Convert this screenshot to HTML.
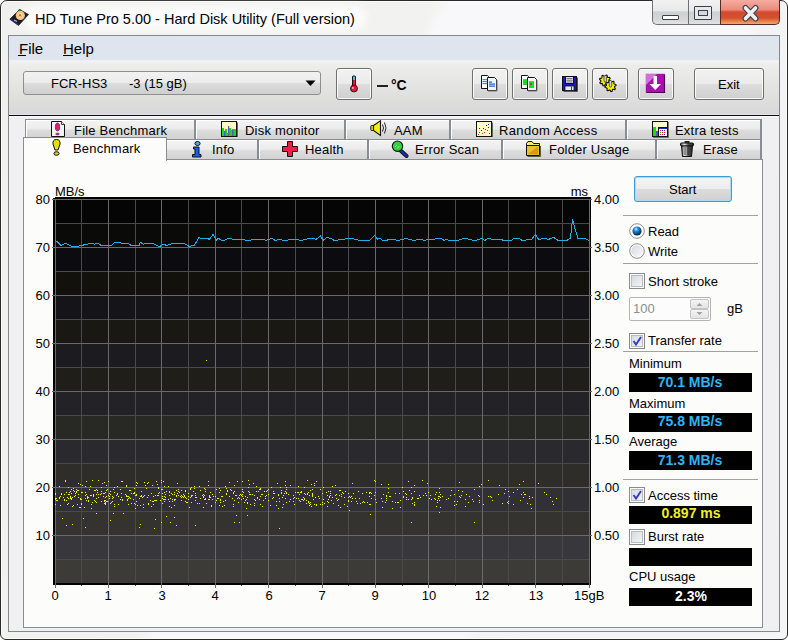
<!DOCTYPE html>
<html><head><meta charset="utf-8"><style>
*{margin:0;padding:0;box-sizing:border-box}
html,body{width:788px;height:640px;overflow:hidden;background:#fff}
body{position:relative;font-family:"Liberation Sans", sans-serif;}
.abs{position:absolute}
.t{position:absolute;white-space:pre;line-height:normal;font-family:"Liberation Sans", sans-serif;}
</style></head><body>
<!-- window frame -->
<div class="abs" style="left:0;top:0;width:788px;height:640px;border:1px solid #2a2a2a;border-radius:7px 7px 6px 6px;background:linear-gradient(115deg,#f0f0ee 0%,#f2f2f0 40%,#f8f8fa 41.5%,#f8f8fa 70%,#f3f3f5 71.5%,#f5f5f7 100%);box-shadow:inset 1px 1px 0 #fcfcfc, inset -1px -1px 0 #fcfcfc"></div>
<div class="abs" style="left:22px;top:6px;width:345px;height:24px;background:#fcfcfc;border-radius:12px;filter:blur(4px)"></div>
<!-- client border -->
<div class="abs" style="left:8px;top:35px;width:772px;height:597px;border:1px solid #84878c;background:#f0f0f2"></div>
<!-- menu bar -->
<div class="abs" style="left:9px;top:36px;width:770px;height:24px;background:#dfe5ee"></div>
<div class="abs" style="left:9px;top:60px;width:770px;height:3px;background:#f1f1f3"></div>
<!-- toolbar -->
<div class="abs" style="left:9px;top:63px;width:770px;height:51px;background:linear-gradient(#eeeeec,#e2e2e0 55%,#d8d8da)"></div>
<div class="abs" style="left:9px;top:114px;width:770px;height:1px;background:#e6e6e6"></div>
<div class="abs" style="left:9px;top:115px;width:770px;height:1px;background:#0c0c0c"></div>
<div class="abs" style="left:9px;top:116px;width:770px;height:1px;background:#fcfcfc"></div>
<div class="t" style="left:35px;top:11px;font-size:14.5px;color:#000;font-weight:400;">HD Tune Pro 5.00 - Hard Disk Utility (Full version)</div><svg class="abs" style="left:9px;top:8px" width="21" height="19" viewBox="0 0 21 19"><path d="M10.5 1.5 L19.5 6.5 L9.5 17.5 L0.8 11.2 Z" fill="#1a1a22" stroke="#222" stroke-width="0.8"/><path d="M2 11 L9.5 16.5" stroke="#2a2ad0" stroke-width="1"/><circle cx="11.3" cy="7.4" r="4.6" fill="#f6c47a"/><circle cx="11.3" cy="7.4" r="2.6" fill="#f9d9a8"/><path d="M9.8 8.6 L11 6.2 L12.2 8.6" stroke="#d04040" stroke-width="0.9" fill="none"/><ellipse cx="10.8" cy="2.2" rx="1.6" ry="0.9" fill="#1a7a2a"/><path d="M5 12 L8 13.5" stroke="#bbb" stroke-width="1.2"/></svg><div class="abs" style="left:652px;top:0;width:36px;height:25px;border:1px solid #6f7074;border-top:none;border-right:none;border-radius:0 0 0 5px;background:linear-gradient(#f2f2f2 0%,#e9e9e9 45%,#cfd0d2 50%,#d6d6d8 80%,#e2e2e2 100%)"></div><div class="abs" style="left:688px;top:0;width:32px;height:25px;border-bottom:1px solid #6f7074;border-left:1px solid #6f7074;background:linear-gradient(#f2f2f2 0%,#e9e9e9 45%,#cfd0d2 50%,#d6d6d8 80%,#e2e2e2 100%)"></div><div class="abs" style="left:720px;top:0;width:60px;height:25px;border:1px solid #5a2a22;border-top:none;border-radius:0 0 5px 0;background:linear-gradient(#f5aca0 0%,#eb8c7c 40%,#d44a30 50%,#d4502f 75%,#e8884c 90%,#f0a878 100%)"></div><div class="abs" style="left:662px;top:15px;width:17px;height:5px;border:1px solid #3c3f52;background:#fff;border-radius:1px"></div><div class="abs" style="left:694px;top:6px;width:18px;height:14px;border:1.5px solid #3c3f52;background:#e8e8ea;border-radius:1px"></div><div class="abs" style="left:698px;top:10px;width:10px;height:6px;border:1.5px solid #3c3f52;background:#d8d8da"></div><svg class="abs" style="left:740px;top:4px" width="21" height="18" viewBox="0 0 21 18"><path d="M5.5 4 L15.5 14.5 M15.5 4 L5.5 14.5" stroke="#404454" stroke-width="6" stroke-linecap="round"/><path d="M5.5 4 L15.5 14.5 M15.5 4 L5.5 14.5" stroke="#f0f0f0" stroke-width="3.6" stroke-linecap="round"/></svg><div class="t" style="left:19px;top:40px;font-size:15px;color:#000;font-weight:400;">File</div><div class="t" style="left:63px;top:40px;font-size:15px;color:#000;font-weight:400;">Help</div><div class="abs" style="left:18px;top:55px;width:8px;height:1px;background:#000"></div><div class="abs" style="left:63px;top:55px;width:10px;height:1px;background:#000"></div><div class="abs" style="left:23px;top:71px;width:298px;height:24px;border:1px solid #8e8f8f;border-radius:3px;background:linear-gradient(#f2f2f2 0%,#ebebeb 50%,#dddddd 51%,#cfcfcf 100%)"></div><div class="t" style="left:51px;top:76px;font-size:13px;color:#000;font-weight:400;">FCR-HS3</div><div class="t" style="left:129px;top:76px;font-size:13px;color:#000;font-weight:400;">-3 (15 gB)</div><svg class="abs" style="left:305px;top:80px" width="11" height="7" viewBox="0 0 11 7"><path d="M0.5 0.5 L10.5 0.5 L5.5 6 Z" fill="#000"/></svg><div class="abs" style="left:336px;top:68px;width:36px;height:32px;border:1px solid #707070;border-radius:3px;background:linear-gradient(#f2f2f2 0%,#ebebeb 50%,#dddddd 51%,#cfcfcf 100%);box-shadow:inset 0 0 0 1px rgba(255,255,255,0.85)"></div><svg class="abs" style="left:349px;top:75px" width="10" height="18" viewBox="0 0 10 18"><rect x="3" y="0.5" width="4" height="12" rx="1.5" fill="#111"/><rect x="4" y="1.5" width="2" height="3.5" fill="#40c8f0"/><rect x="4" y="5" width="2" height="8" fill="#e01838"/><circle cx="5" cy="13.5" r="3.8" fill="#111"/><circle cx="5" cy="13.5" r="2.9" fill="#e01838"/><rect x="3.2" y="12.3" width="1.4" height="1.4" fill="#fff"/></svg><div class="abs" style="left:377px;top:85px;width:11px;height:2px;background:#222"></div><div class="t" style="left:391px;top:77px;font-size:14px;color:#000;font-weight:700;">°C</div><div class="abs" style="left:472px;top:68px;width:36px;height:32px;border:1px solid #707070;border-radius:3px;background:linear-gradient(#f2f2f2 0%,#ebebeb 50%,#dddddd 51%,#cfcfcf 100%);box-shadow:inset 0 0 0 1px rgba(255,255,255,0.85)"></div><div class="abs" style="left:512px;top:68px;width:36px;height:32px;border:1px solid #707070;border-radius:3px;background:linear-gradient(#f2f2f2 0%,#ebebeb 50%,#dddddd 51%,#cfcfcf 100%);box-shadow:inset 0 0 0 1px rgba(255,255,255,0.85)"></div><div class="abs" style="left:552px;top:68px;width:36px;height:32px;border:1px solid #707070;border-radius:3px;background:linear-gradient(#f2f2f2 0%,#ebebeb 50%,#dddddd 51%,#cfcfcf 100%);box-shadow:inset 0 0 0 1px rgba(255,255,255,0.85)"></div><div class="abs" style="left:592px;top:68px;width:36px;height:32px;border:1px solid #707070;border-radius:3px;background:linear-gradient(#f2f2f2 0%,#ebebeb 50%,#dddddd 51%,#cfcfcf 100%);box-shadow:inset 0 0 0 1px rgba(255,255,255,0.85)"></div><div class="abs" style="left:638px;top:68px;width:36px;height:32px;border:1px solid #707070;border-radius:3px;background:linear-gradient(#f2f2f2 0%,#ebebeb 50%,#dddddd 51%,#cfcfcf 100%);box-shadow:inset 0 0 0 1px rgba(255,255,255,0.85)"></div><div class="abs" style="left:694px;top:68px;width:70px;height:32px;border:1px solid #707070;border-radius:3px;background:linear-gradient(#f2f2f2 0%,#ebebeb 50%,#dddddd 51%,#cfcfcf 100%);box-shadow:inset 0 0 0 1px rgba(255,255,255,0.85)"></div><div class="t" style="left:718px;top:77px;font-size:13px;color:#000;font-weight:400;">Exit</div><svg class="abs" style="left:481px;top:75px" width="18" height="17" viewBox="0 0 18 17"><path d="M0.5 0.5 H6.5 L7.5 1.5 V13.5 H0.5 Z" fill="#fff" stroke="#111"/><rect x="1.5" y="4" width="5" height="1.2" fill="#1aa0e0"/><rect x="1.5" y="6" width="5" height="1.2" fill="#1aa0e0"/><rect x="1.5" y="8" width="5" height="1.2" fill="#1aa0e0"/><path d="M6.5 2.5 H13.5 L15.5 4.5 V15.5 H6.5 Z" fill="#f4f4f4" stroke="#111"/><rect x="8" y="6.5" width="3" height="1.2" fill="#1060e0"/><rect x="8" y="8.5" width="6" height="1.2" fill="#1060e0"/><rect x="8" y="10.5" width="6" height="1.2" fill="#1060e0"/><path d="M16 5 V16 H7" stroke="#777" stroke-width="1" fill="none"/></svg><svg class="abs" style="left:521px;top:75px" width="18" height="17" viewBox="0 0 18 17"><path d="M0.5 0.5 H6.5 L7.5 1.5 V13.5 H0.5 Z" fill="#fff" stroke="#111"/><rect x="2" y="4" width="4" height="6" fill="#10e020"/><rect x="2" y="4" width="4" height="1" fill="#30c0f0"/><path d="M6.5 2.5 H13.5 L15.5 4.5 V15.5 H6.5 Z" fill="#f4f4f4" stroke="#111"/><rect x="8" y="6" width="5" height="7" fill="#10e020"/><rect x="8" y="6" width="5" height="1" fill="#30c0f0"/><circle cx="10" cy="9" r="1" fill="#e02020"/><path d="M16 5 V16 H7" stroke="#777" stroke-width="1" fill="none"/></svg><svg class="abs" style="left:562px;top:76px" width="16" height="16" viewBox="0 0 16 16"><rect x="0.5" y="0.5" width="14" height="14" fill="#1818c0" stroke="#111"/><rect x="3.5" y="0.5" width="8" height="7" fill="#ddd" stroke="#111"/><rect x="4.5" y="2" width="6" height="0.8" fill="#666"/><rect x="4.5" y="3.8" width="6" height="0.8" fill="#666"/><rect x="4.5" y="5.6" width="6" height="0.8" fill="#666"/><rect x="3" y="10" width="9" height="4.5" fill="#e8e8e8" stroke="#111" stroke-width="0.8"/><rect x="9" y="10.5" width="0.8" height="4" fill="#111"/><path d="M15.5 1.5 V15.5 H1.5" stroke="#555" fill="none"/></svg><svg class="abs" style="left:599px;top:74px" width="19" height="19" viewBox="0 0 19 19"><path d="M11.49 7.61 L11.17 8.66 L9.48 8.85 L8.96 9.48 L9.09 11.17 L8.12 11.68 L6.80 10.62 L5.98 10.70 L4.89 11.99 L3.84 11.67 L3.65 9.98 L3.02 9.46 L1.33 9.59 L0.82 8.62 L1.88 7.30 L1.80 6.48 L0.51 5.39 L0.83 4.34 L2.52 4.15 L3.04 3.52 L2.91 1.83 L3.88 1.32 L5.20 2.38 L6.02 2.30 L7.11 1.01 L8.16 1.33 L8.35 3.02 L8.98 3.54 L10.67 3.41 L11.18 4.38 L10.12 5.70 L10.20 6.52 Z" fill="#f4f000" stroke="#111" stroke-width="1.1" stroke-linejoin="round"/><path d="M16.41 14.68 L15.80 15.59 L14.13 15.27 L13.45 15.72 L13.08 17.37 L12.00 17.58 L11.05 16.18 L10.24 16.01 L8.82 16.91 L7.91 16.30 L8.23 14.63 L7.78 13.95 L6.13 13.58 L5.92 12.50 L7.32 11.55 L7.49 10.74 L6.59 9.32 L7.20 8.41 L8.87 8.73 L9.55 8.28 L9.92 6.63 L11.00 6.42 L11.95 7.82 L12.76 7.99 L14.18 7.09 L15.09 7.70 L14.77 9.37 L15.22 10.05 L16.87 10.42 L17.08 11.50 L15.68 12.45 L15.51 13.26 Z" fill="#f4f000" stroke="#111" stroke-width="1.1" stroke-linejoin="round"/><rect x="5" y="1.5" width="2.4" height="6.5" rx="1" fill="#d0d0e0" stroke="#333" stroke-width="0.7"/><rect x="10.3" y="6.5" width="2.4" height="6.5" rx="1" fill="#d0d0e0" stroke="#333" stroke-width="0.7"/></svg><svg class="abs" style="left:645px;top:73px" width="21" height="21" viewBox="0 0 21 21"><rect x="0.8" y="0.8" width="19" height="19" fill="#a810b0"/><path d="M1 1 H12 L1 12 Z" fill="#d070d8"/><path d="M1.5 19.5 H19.5 V1.5" stroke="#500050" stroke-width="1.2" fill="none"/><path d="M8.5 3 H12 V11 H16 L10.25 17 L4.5 11 H8.5 Z" fill="#fff"/></svg><div class="abs" style="left:25px;top:119px;width:171px;height:20px;border-top:1px solid #898c95;border-left:1px solid #898c95;border-right:2px solid #898c95;background:linear-gradient(#f3f3f3 0%,#ececec 45%,#dcdcdc 55%,#d2d2d2 100%);box-shadow:inset 1px 1px 0 #fff"></div><div class="abs" style="left:196px;top:119px;width:150px;height:20px;border-top:1px solid #898c95;border-right:2px solid #898c95;background:linear-gradient(#f3f3f3 0%,#ececec 45%,#dcdcdc 55%,#d2d2d2 100%);box-shadow:inset 1px 1px 0 #fff"></div><div class="abs" style="left:346px;top:119px;width:105px;height:20px;border-top:1px solid #898c95;border-right:2px solid #898c95;background:linear-gradient(#f3f3f3 0%,#ececec 45%,#dcdcdc 55%,#d2d2d2 100%);box-shadow:inset 1px 1px 0 #fff"></div><div class="abs" style="left:451px;top:119px;width:176px;height:20px;border-top:1px solid #898c95;border-right:2px solid #898c95;background:linear-gradient(#f3f3f3 0%,#ececec 45%,#dcdcdc 55%,#d2d2d2 100%);box-shadow:inset 1px 1px 0 #fff"></div><div class="abs" style="left:627px;top:119px;width:135px;height:20px;border-top:1px solid #898c95;border-right:2px solid #898c95;background:linear-gradient(#f3f3f3 0%,#ececec 45%,#dcdcdc 55%,#d2d2d2 100%);box-shadow:inset 1px 1px 0 #fff"></div><div class="abs" style="left:166px;top:139px;width:93px;height:21px;border-top:1px solid #898c95;border-right:2px solid #898c95;background:linear-gradient(#f3f3f3 0%,#ececec 45%,#dcdcdc 55%,#d2d2d2 100%);box-shadow:inset 1px 1px 0 #fff"></div><div class="abs" style="left:259px;top:139px;width:110px;height:21px;border-top:1px solid #898c95;border-right:2px solid #898c95;background:linear-gradient(#f3f3f3 0%,#ececec 45%,#dcdcdc 55%,#d2d2d2 100%);box-shadow:inset 1px 1px 0 #fff"></div><div class="abs" style="left:369px;top:139px;width:134px;height:21px;border-top:1px solid #898c95;border-right:2px solid #898c95;background:linear-gradient(#f3f3f3 0%,#ececec 45%,#dcdcdc 55%,#d2d2d2 100%);box-shadow:inset 1px 1px 0 #fff"></div><div class="abs" style="left:503px;top:139px;width:154px;height:21px;border-top:1px solid #898c95;border-right:2px solid #898c95;background:linear-gradient(#f3f3f3 0%,#ececec 45%,#dcdcdc 55%,#d2d2d2 100%);box-shadow:inset 1px 1px 0 #fff"></div><div class="abs" style="left:657px;top:139px;width:105px;height:21px;border-top:1px solid #898c95;border-right:2px solid #898c95;background:linear-gradient(#f3f3f3 0%,#ececec 45%,#dcdcdc 55%,#d2d2d2 100%);box-shadow:inset 1px 1px 0 #fff"></div><div class="t" style="left:74px;top:123px;font-size:13px;color:#000;font-weight:400;letter-spacing:0.2px">File Benchmark</div><div class="t" style="left:245px;top:123px;font-size:13px;color:#000;font-weight:400;letter-spacing:0.2px">Disk monitor</div><div class="t" style="left:394px;top:123px;font-size:13px;color:#000;font-weight:400;letter-spacing:0.2px">AAM</div><div class="t" style="left:499px;top:123px;font-size:13px;color:#000;font-weight:400;letter-spacing:0.35px">Random Access</div><div class="t" style="left:675px;top:123px;font-size:13px;color:#000;font-weight:400;letter-spacing:0.2px">Extra tests</div><div class="t" style="left:212px;top:142px;font-size:13px;color:#000;font-weight:400;letter-spacing:0.2px">Info</div><div class="t" style="left:305px;top:142px;font-size:13px;color:#000;font-weight:400;letter-spacing:0.2px">Health</div><div class="t" style="left:415px;top:142px;font-size:13px;color:#000;font-weight:400;letter-spacing:0.2px">Error Scan</div><div class="t" style="left:549px;top:142px;font-size:13px;color:#000;font-weight:400;letter-spacing:0.2px">Folder Usage</div><div class="t" style="left:703px;top:142px;font-size:13px;color:#000;font-weight:400;letter-spacing:0.2px">Erase</div><div class="abs" style="left:23px;top:159px;width:740px;height:469px;border:1px solid #898c95;background:#fcfcfa"></div><div class="abs" style="left:23px;top:137px;width:144px;height:24px;border:1px solid #898c95;border-bottom:none;background:#fcfcfa"></div><div class="t" style="left:73px;top:141px;font-size:13px;color:#000;font-weight:400;letter-spacing:0.2px">Benchmark</div><svg class="abs" style="left:51px;top:121px" width="15" height="16" viewBox="0 0 15 16"><path d="M0.5 0.5 H10.5 L13.5 3.5 V15.5 H0.5 Z" fill="#f4f4f4" stroke="#111"/><path d="M10.5 0.5 V3.5 H13.5" fill="#fff" stroke="#111" stroke-width="0.8"/><ellipse cx="6.5" cy="6" rx="2.2" ry="4" fill="#e8205a" stroke="#5030a0" stroke-width="0.8"/><ellipse cx="6.5" cy="13" rx="1.8" ry="1" fill="#e8205a" stroke="#5030a0" stroke-width="0.6"/></svg><svg class="abs" style="left:52px;top:139px" width="9" height="17" viewBox="0 0 9 17"><path d="M4.5 0.5 C7.5 0.5 8.3 2.5 8 5 L6 11 H3 L1 5 C0.7 2.5 1.5 0.5 4.5 0.5 Z" fill="#e0e010" stroke="#111" stroke-width="1"/><ellipse cx="4.5" cy="14.5" rx="2.6" ry="1.8" fill="#d8d010" stroke="#111"/></svg><svg class="abs" style="left:221px;top:121px" width="17" height="16" viewBox="0 0 17 16"><rect x="0.5" y="0.5" width="15" height="15" fill="#fcfcc0" stroke="#111"/><path d="M1 7 H3 V11 H4 V8 H6 V12 H7 V5 H8 V7 H10 V9 H11 V8 H15 V15 H1 Z" fill="#10e010"/><rect x="3" y="10" width="1.5" height="5" fill="#6050d0"/><rect x="7" y="5" width="1.2" height="10" fill="#6050d0"/><rect x="11" y="9" width="1.5" height="6" fill="#6050d0"/><path d="M16.5 1.5 V16.5 H1.5" stroke="#666" fill="none"/></svg><svg class="abs" style="left:192px;top:141px" width="10" height="17" viewBox="0 0 10 17"><ellipse cx="5.5" cy="2.5" rx="2.6" ry="2" fill="#30b8f0" stroke="#111"/><path d="M1.5 6 H7 V13.5 H9 V16 H0.5 V13.5 H3 V8 H1.5 Z" fill="#1060e8" stroke="#111"/></svg><svg class="abs" style="left:282px;top:141px" width="17" height="17" viewBox="0 0 17 17"><path d="M5.5 0.5 H10.5 V5.5 H15.5 V10.5 H10.5 V15.5 H5.5 V10.5 H0.5 V5.5 H5.5 Z" fill="#e8204a" stroke="#111" stroke-width="1"/></svg><svg class="abs" style="left:370px;top:120px" width="18" height="17" viewBox="0 0 18 17"><rect x="0.8" y="5.5" width="3" height="5" rx="1" fill="#e8e010" stroke="#111"/><path d="M3.5 5.5 L10.5 0.8 V15.5 L3.5 10.5 Z" fill="#f0f010" stroke="#111" stroke-width="1.1"/><path d="M12.5 4.5 Q14.5 8 12.5 11.5 M14.5 2.5 Q17.5 8 14.5 13.5" stroke="#111" fill="none" stroke-width="0.9"/></svg><svg class="abs" style="left:391px;top:140px" width="18" height="18" viewBox="0 0 18 18"><path d="M8.5 9.5 L15.5 16" stroke="#111" stroke-width="4" stroke-linecap="round"/><path d="M8.5 9.5 L15.5 16" stroke="#1030c0" stroke-width="2.2" stroke-linecap="round"/><circle cx="6.5" cy="6.2" r="5.2" fill="#30d040" stroke="#111" stroke-width="1.1"/><path d="M4 7 L6 5 M6 8.5 L8.5 6" stroke="#b0f0b0" stroke-width="0.8"/></svg><svg class="abs" style="left:476px;top:121px" width="17" height="16" viewBox="0 0 17 16"><rect x="0.5" y="0.5" width="15" height="15" fill="#fcfcc8" stroke="#111"/><path d="M16.5 1.5 V16.5 H1.5" stroke="#666" fill="none"/><g fill="#1030d0"><rect x="3" y="7" width="1" height="1"/><rect x="7" y="7" width="1" height="1"/><rect x="10" y="4" width="1" height="1"/><rect x="12" y="3" width="1" height="1"/><rect x="5" y="9" width="1" height="1"/><rect x="12" y="6" width="1" height="1"/></g><g fill="#e02040"><rect x="2" y="13" width="1" height="1"/><rect x="3" y="11" width="1" height="1"/><rect x="6" y="12" width="1" height="1"/><rect x="8" y="11" width="1" height="1"/><rect x="11" y="9" width="1" height="1"/><rect x="13" y="12" width="1" height="1"/><rect x="9" y="8" width="1" height="1"/></g></svg><svg class="abs" style="left:526px;top:141px" width="16" height="16" viewBox="0 0 16 16"><path d="M0.5 2.5 L2 0.5 H6 L7.5 2.5 H13.5 V5.5 H0.5 Z" fill="#f8e870" stroke="#111"/><path d="M0.5 4.5 H13.5 V14.5 H0.5 Z" fill="#e8c030" stroke="#111"/><path d="M2 13 L12 5.5 V13.5 Z" fill="#d89820"/><path d="M14.5 5 V15.5 H1.5" stroke="#555" fill="none"/></svg><svg class="abs" style="left:652px;top:121px" width="17" height="17" viewBox="0 0 17 17" shape-rendering="crispEdges"><rect x="0" y="0" width="16" height="16" fill="#111"/><rect x="1" y="1" width="14" height="14" fill="#fcfcc8"/><rect x="1" y="6" width="3" height="9" fill="#10e010"/><rect x="4" y="10" width="2" height="5" fill="#6050d0"/><rect x="6" y="6" width="10" height="10" fill="#111"/><rect x="7" y="7" width="8" height="8" fill="#fafafa"/><rect x="7" y="7" width="8" height="1" fill="#1030d0"/><g fill="#e02040"><rect x="8" y="9" width="1" height="1"/><rect x="12" y="9" width="1" height="1"/><rect x="10" y="11" width="1" height="1"/><rect x="12" y="11" width="1" height="1"/><rect x="8" y="13" width="1" height="1"/><rect x="10" y="13" width="1" height="1"/></g><g fill="#1030d0"><rect x="10" y="9" width="1" height="1"/><rect x="12" y="13" width="1" height="1"/></g><rect x="8" y="11" width="1" height="1" fill="#10c010"/><rect x="16" y="1" width="1" height="16" fill="#777"/><rect x="1" y="16" width="16" height="1" fill="#777"/></svg><svg class="abs" style="left:680px;top:141px" width="15" height="17" viewBox="0 0 15 17"><defs><linearGradient id="tg" x1="0" x2="1"><stop offset="0" stop-color="#444"/><stop offset="0.3" stop-color="#eee"/><stop offset="0.6" stop-color="#555"/><stop offset="1" stop-color="#222"/></linearGradient></defs><rect x="5" y="0.5" width="4" height="2" fill="#333" stroke="#111" stroke-width="0.8"/><rect x="0.5" y="2" width="13" height="3" rx="1" fill="url(#tg)" stroke="#111"/><path d="M1.5 5 H12.5 L11.5 15.5 H2.5 Z" fill="url(#tg)" stroke="#111"/><path d="M5 6 V14 M8 6 V14" stroke="#222" stroke-width="0.8"/></svg><div class="t" style="left:55px;top:184px;font-size:13px;color:#000;font-weight:400;">MB/s</div><div class="t" style="right:200px;top:184px;font-size:13px;color:#000;font-weight:400;text-align:right;">ms</div><div class="t" style="right:738px;top:192px;font-size:13px;color:#000;font-weight:400;text-align:right;">80</div><div class="t" style="left:594px;top:192px;font-size:13px;color:#000;font-weight:400;">4.00</div><div class="t" style="right:738px;top:240px;font-size:13px;color:#000;font-weight:400;text-align:right;">70</div><div class="t" style="left:594px;top:240px;font-size:13px;color:#000;font-weight:400;">3.50</div><div class="t" style="right:738px;top:288px;font-size:13px;color:#000;font-weight:400;text-align:right;">60</div><div class="t" style="left:594px;top:288px;font-size:13px;color:#000;font-weight:400;">3.00</div><div class="t" style="right:738px;top:336px;font-size:13px;color:#000;font-weight:400;text-align:right;">50</div><div class="t" style="left:594px;top:336px;font-size:13px;color:#000;font-weight:400;">2.50</div><div class="t" style="right:738px;top:384px;font-size:13px;color:#000;font-weight:400;text-align:right;">40</div><div class="t" style="left:594px;top:384px;font-size:13px;color:#000;font-weight:400;">2.00</div><div class="t" style="right:738px;top:432px;font-size:13px;color:#000;font-weight:400;text-align:right;">30</div><div class="t" style="left:594px;top:432px;font-size:13px;color:#000;font-weight:400;">1.50</div><div class="t" style="right:738px;top:480px;font-size:13px;color:#000;font-weight:400;text-align:right;">20</div><div class="t" style="left:594px;top:480px;font-size:13px;color:#000;font-weight:400;">1.00</div><div class="t" style="right:738px;top:528px;font-size:13px;color:#000;font-weight:400;text-align:right;">10</div><div class="t" style="left:594px;top:528px;font-size:13px;color:#000;font-weight:400;">0.50</div><div class="t" style="left:-45px;width:200px;text-align:center;top:588px;font-size:13px;color:#000;font-weight:400;">0</div><div class="t" style="left:8px;width:200px;text-align:center;top:588px;font-size:13px;color:#000;font-weight:400;">1</div><div class="t" style="left:62px;width:200px;text-align:center;top:588px;font-size:13px;color:#000;font-weight:400;">3</div><div class="t" style="left:115px;width:200px;text-align:center;top:588px;font-size:13px;color:#000;font-weight:400;">4</div><div class="t" style="left:169px;width:200px;text-align:center;top:588px;font-size:13px;color:#000;font-weight:400;">6</div><div class="t" style="left:222px;width:200px;text-align:center;top:588px;font-size:13px;color:#000;font-weight:400;">7</div><div class="t" style="left:275px;width:200px;text-align:center;top:588px;font-size:13px;color:#000;font-weight:400;">9</div><div class="t" style="left:329px;width:200px;text-align:center;top:588px;font-size:13px;color:#000;font-weight:400;">10</div><div class="t" style="left:382px;width:200px;text-align:center;top:588px;font-size:13px;color:#000;font-weight:400;">12</div><div class="t" style="left:436px;width:200px;text-align:center;top:588px;font-size:13px;color:#000;font-weight:400;">13</div><div class="t" style="left:574px;top:588px;font-size:13px;color:#000;font-weight:400;">15gB</div><div class="abs" style="left:634px;top:176px;width:98px;height:26px;border:1px solid #3c9ad6;border-radius:3px;background:linear-gradient(#f4f4f4 0%,#ececec 50%,#dcdcdc 51%,#d0d0d0 100%);box-shadow:inset 0 0 0 1px #a8dcf4"></div><div class="t" style="left:669px;top:182px;font-size:13px;color:#000;font-weight:400;">Start</div><div class="abs" style="left:623px;top:215px;width:135px;height:1px;background:#a0a0a0"></div><div class="abs" style="left:623px;top:263px;width:135px;height:1px;background:#a0a0a0"></div><div class="abs" style="left:623px;top:351px;width:135px;height:1px;background:#a0a0a0"></div><div class="abs" style="left:623px;top:479px;width:135px;height:1px;background:#a0a0a0"></div><svg class="abs" style="left:628px;top:222px" width="18" height="38" viewBox="0 0 18 38"><defs><radialGradient id="rb" cx="0.4" cy="0.3" r="0.65"><stop offset="0" stop-color="#b8f0ff"/><stop offset="0.35" stop-color="#2090e0"/><stop offset="0.8" stop-color="#0a4a80"/><stop offset="1" stop-color="#0a3040"/></radialGradient><linearGradient id="rg" x1="0" y1="0" x2="1" y2="1"><stop offset="0" stop-color="#d4d8de"/><stop offset="1" stop-color="#fafafa"/></linearGradient></defs><circle cx="9" cy="9" r="7.3" fill="#fff" stroke="#8c8c8c" stroke-width="1"/><circle cx="9" cy="9" r="4.6" fill="url(#rb)"/><circle cx="9" cy="29" r="7.3" fill="#fff" stroke="#8c8c8c" stroke-width="1"/><circle cx="9" cy="29" r="5.8" fill="url(#rg)"/></svg><div class="t" style="left:648px;top:224px;font-size:13px;color:#000;font-weight:400;">Read</div><div class="t" style="left:648px;top:244px;font-size:13px;color:#000;font-weight:400;">Write</div><div class="abs" style="left:629px;top:273px;width:16px;height:16px;border:1px solid #8a8a8a;background:linear-gradient(135deg,#d2d6de,#f8f8f8);box-shadow:inset 0 0 0 1px #fbfbfb, inset 0 0 0 2px #b8bcc2"></div><div class="t" style="left:648px;top:274px;font-size:13px;color:#000;font-weight:400;">Short stroke</div><div class="abs" style="left:629px;top:297px;width:82px;height:24px;border:1px solid #b4b4b4;border-radius:2px;background:#fcfcfc"></div><div class="t" style="left:633px;top:301px;font-size:13px;color:#8d8d8d;font-weight:400;">100</div><div class="abs" style="left:690px;top:299px;width:19px;height:10px;border:1px solid #c4c4c4;border-radius:2px;background:linear-gradient(#f4f4f4,#e4e4e4)"></div><div class="abs" style="left:690px;top:309px;width:19px;height:10px;border:1px solid #c4c4c4;border-radius:2px;background:linear-gradient(#f4f4f4,#e4e4e4)"></div><svg class="abs" style="left:690px;top:299px" width="19" height="20" viewBox="0 0 19 20"><path d="M6.5 7 L9.5 4 L12.5 7 Z M6.5 13 L9.5 16 L12.5 13 Z" fill="#a0a0a0"/></svg><div class="t" style="left:727px;top:301px;font-size:13px;color:#000;font-weight:400;">gB</div><div class="abs" style="left:629px;top:333px;width:16px;height:16px;border:1px solid #8a8a8a;background:linear-gradient(135deg,#d2d6de,#f8f8f8);box-shadow:inset 0 0 0 1px #fbfbfb, inset 0 0 0 2px #b8bcc2"></div><svg class="abs" style="left:630px;top:334px" width="14" height="14" viewBox="0 0 14 14"><path d="M3.5 7 L6 10.5 L11 3" stroke="#3838c8" stroke-width="1.9" fill="none"/></svg><div class="t" style="left:648px;top:333px;font-size:13px;color:#000;font-weight:400;">Transfer rate</div><div class="t" style="left:629px;top:356px;font-size:13px;color:#000;font-weight:400;">Minimum</div><div class="abs" style="left:629px;top:373px;width:123px;height:19px;background:#000"></div><div class="t" style="left:590px;width:200px;text-align:center;top:374px;font-size:14px;color:#30b4f4;font-weight:700;">70.1 MB/s</div><div class="t" style="left:629px;top:396px;font-size:13px;color:#000;font-weight:400;">Maximum</div><div class="abs" style="left:629px;top:413px;width:123px;height:19px;background:#000"></div><div class="t" style="left:590px;width:200px;text-align:center;top:413px;font-size:14px;color:#30b4f4;font-weight:700;">75.8 MB/s</div><div class="t" style="left:629px;top:434px;font-size:13px;color:#000;font-weight:400;">Average</div><div class="abs" style="left:629px;top:451px;width:123px;height:19px;background:#000"></div><div class="t" style="left:590px;width:200px;text-align:center;top:452px;font-size:14px;color:#30b4f4;font-weight:700;">71.3 MB/s</div><div class="abs" style="left:629px;top:487px;width:16px;height:16px;border:1px solid #8a8a8a;background:linear-gradient(135deg,#d2d6de,#f8f8f8);box-shadow:inset 0 0 0 1px #fbfbfb, inset 0 0 0 2px #b8bcc2"></div><svg class="abs" style="left:630px;top:488px" width="14" height="14" viewBox="0 0 14 14"><path d="M3.5 7 L6 10.5 L11 3" stroke="#3838c8" stroke-width="1.9" fill="none"/></svg><div class="t" style="left:648px;top:488px;font-size:13px;color:#000;font-weight:400;">Access time</div><div class="abs" style="left:629px;top:506px;width:123px;height:18px;background:#000"></div><div class="t" style="left:591px;width:200px;text-align:center;top:505px;font-size:14px;color:#f0f020;font-weight:700;">0.897 ms</div><div class="abs" style="left:629px;top:529px;width:16px;height:16px;border:1px solid #8a8a8a;background:linear-gradient(135deg,#d2d6de,#f8f8f8);box-shadow:inset 0 0 0 1px #fbfbfb, inset 0 0 0 2px #b8bcc2"></div><div class="t" style="left:648px;top:529px;font-size:13px;color:#000;font-weight:400;">Burst rate</div><div class="abs" style="left:629px;top:548px;width:123px;height:18px;background:#000"></div><div class="t" style="left:629px;top:569px;font-size:13px;color:#000;font-weight:400;">CPU usage</div><div class="abs" style="left:629px;top:588px;width:123px;height:18px;background:#000"></div><div class="t" style="left:591px;width:200px;text-align:center;top:588px;font-size:14px;color:#ffffff;font-weight:700;">2.3%</div>
<svg class="abs" style="left:0;top:0" width="788" height="640" viewBox="0 0 788 640"><rect x="55" y="199" width="535" height="24" fill="#050505"/><rect x="55" y="223" width="535" height="24" fill="#0a0a08"/><rect x="55" y="247" width="535" height="24" fill="#0c0c10"/><rect x="55" y="271" width="535" height="24" fill="#12110c"/><rect x="55" y="295" width="535" height="24" fill="#151519"/><rect x="55" y="319" width="535" height="24" fill="#191812"/><rect x="55" y="343" width="535" height="24" fill="#1c1c20"/><rect x="55" y="367" width="535" height="24" fill="#1f1e19"/><rect x="55" y="391" width="535" height="24" fill="#232327"/><rect x="55" y="415" width="535" height="24" fill="#282824"/><rect x="55" y="439" width="535" height="24" fill="#2a2a2e"/><rect x="55" y="463" width="535" height="24" fill="#2e2d29"/><rect x="55" y="487" width="535" height="24" fill="#303035"/><rect x="55" y="511" width="535" height="24" fill="#343330"/><rect x="55" y="535" width="535" height="24" fill="#38383c"/><rect x="55" y="559" width="535" height="24" fill="#3c3b38"/><rect x="53" y="198" width="2" height="387" fill="#000"/><rect x="55" y="197" width="536" height="2" fill="#000"/><rect x="53" y="583" width="538" height="2" fill="#000"/><rect x="590" y="199" width="1" height="386" fill="#000"/><rect x="55" y="223" width="535" height="1" fill="#4a4a4a"/><rect x="55" y="271" width="535" height="1" fill="#4a4a4a"/><rect x="55" y="319" width="535" height="1" fill="#4a4a4a"/><rect x="55" y="367" width="535" height="1" fill="#4a4a4a"/><rect x="55" y="415" width="535" height="1" fill="#4a4a4a"/><rect x="55" y="463" width="535" height="1" fill="#4a4a4a"/><rect x="55" y="511" width="535" height="1" fill="#4a4a4a"/><rect x="55" y="559" width="535" height="1" fill="#4a4a4a"/><rect x="81" y="199" width="1" height="384" fill="#4a4a4a"/><rect x="81" y="585" width="1" height="1" fill="#4a4a4a"/><rect x="135" y="199" width="1" height="384" fill="#4a4a4a"/><rect x="135" y="585" width="1" height="1" fill="#4a4a4a"/><rect x="188" y="199" width="1" height="384" fill="#4a4a4a"/><rect x="188" y="585" width="1" height="1" fill="#4a4a4a"/><rect x="241" y="199" width="1" height="384" fill="#4a4a4a"/><rect x="241" y="585" width="1" height="1" fill="#4a4a4a"/><rect x="295" y="199" width="1" height="384" fill="#4a4a4a"/><rect x="295" y="585" width="1" height="1" fill="#4a4a4a"/><rect x="348" y="199" width="1" height="384" fill="#4a4a4a"/><rect x="348" y="585" width="1" height="1" fill="#4a4a4a"/><rect x="402" y="199" width="1" height="384" fill="#4a4a4a"/><rect x="402" y="585" width="1" height="1" fill="#4a4a4a"/><rect x="455" y="199" width="1" height="384" fill="#4a4a4a"/><rect x="455" y="585" width="1" height="1" fill="#4a4a4a"/><rect x="508" y="199" width="1" height="384" fill="#4a4a4a"/><rect x="508" y="585" width="1" height="1" fill="#4a4a4a"/><rect x="562" y="199" width="1" height="384" fill="#4a4a4a"/><rect x="562" y="585" width="1" height="1" fill="#4a4a4a"/><rect x="52" y="199" width="540" height="1" fill="#6a6a6a"/><rect x="52" y="247" width="540" height="1" fill="#6a6a6a"/><rect x="52" y="295" width="540" height="1" fill="#6a6a6a"/><rect x="52" y="343" width="540" height="1" fill="#6a6a6a"/><rect x="52" y="391" width="540" height="1" fill="#6a6a6a"/><rect x="52" y="439" width="540" height="1" fill="#6a6a6a"/><rect x="52" y="487" width="540" height="1" fill="#6a6a6a"/><rect x="52" y="535" width="540" height="1" fill="#6a6a6a"/><rect x="55" y="199" width="1" height="389" fill="#6a6a6a"/><rect x="108" y="199" width="1" height="389" fill="#6a6a6a"/><rect x="161" y="199" width="1" height="389" fill="#6a6a6a"/><rect x="215" y="199" width="1" height="389" fill="#6a6a6a"/><rect x="268" y="199" width="1" height="389" fill="#6a6a6a"/><rect x="322" y="199" width="1" height="389" fill="#6a6a6a"/><rect x="375" y="199" width="1" height="389" fill="#6a6a6a"/><rect x="428" y="199" width="1" height="389" fill="#6a6a6a"/><rect x="482" y="199" width="1" height="389" fill="#6a6a6a"/><rect x="535" y="199" width="1" height="389" fill="#6a6a6a"/><rect x="589" y="199" width="1" height="389" fill="#6a6a6a"/><polyline points="55.3,240.1 61.0,245.4 65.4,243.1 70.8,246.0 77.0,246.3 82.3,245.4 85.9,244.2 91.2,243.6 94.7,244.2 97.4,243.1 101.0,245.4 111.6,245.4 114.8,242.4 119.0,242.4 123.2,243.6 127.6,243.1 131.2,245.4 139.1,245.4 140.4,242.4 143.6,244.2 146.2,243.1 152.5,243.1 159.6,246.7 163.1,244.2 166.7,245.4 173.8,243.1 177.3,243.6 183.5,243.1 188.9,246.3 194.4,245.4 198.9,237.4 201.5,238.9 205.1,238.3 209.5,239.2 213.1,234.2 216.3,240.1 218.4,238.3 221.6,240.5 224.6,240.1 229.1,238.3 232.6,239.2 243.3,239.6 246.8,240.5 250.4,240.1 253.9,239.2 266.4,240.1 271.7,238.3 275.3,240.5 280.6,239.2 283.3,240.5 287.7,240.1 293.0,239.2 301.9,240.5 305.5,239.2 312.6,238.3 316.1,239.2 320.6,236.0 323.2,240.5 326.4,237.4 330.7,238.3 334.2,240.5 343.1,239.2 352.0,238.3 354.6,239.2 360.0,240.5 369.7,240.5 374.5,235.3 377.7,239.2 379.5,238.3 383.1,240.5 394.6,239.2 396.4,240.5 399.9,240.1 406.2,238.3 408.8,239.2 413.3,240.5 420.4,239.2 424.8,240.5 427.5,239.2 432.8,239.2 440.8,238.3 444.3,240.5 447.0,239.2 448.8,240.5 458.5,240.1 464.8,238.3 474.9,240.6 482.0,238.4 484.7,240.6 488.2,238.1 491.8,239.3 501.5,239.3 503.3,240.6 511.3,240.6 514.0,238.1 519.3,238.1 522.0,240.6 531.7,239.3 535.3,234.5 538.5,239.3 545.0,238.4 548.6,239.3 553.9,237.5 558.4,240.6 566.4,240.6 570.4,238.4 572.6,219.2 574.7,227.8 577.9,238.1 581.5,238.4 585.0,238.1 588.6,240.6" fill="none" stroke="#1eb0ea" stroke-width="1" shape-rendering="crispEdges"/><path d="M137 483h1v1h-1zM67 497h1v1h-1zM148 504h1v1h-1zM109 496h1v1h-1zM72 497h1v1h-1zM70 491h1v1h-1zM112 498h1v1h-1zM70 496h1v1h-1zM111 502h1v1h-1zM129 497h1v1h-1zM133 499h1v1h-1zM81 499h1v1h-1zM150 500h1v1h-1zM70 497h1v1h-1zM164 496h1v1h-1zM171 493h1v1h-1zM101 493h1v1h-1zM131 503h1v1h-1zM169 506h1v1h-1zM85 492h1v1h-1zM142 497h1v1h-1zM65 480h1v1h-1zM135 495h1v1h-1zM182 496h1v1h-1zM78 483h1v1h-1zM71 499h1v1h-1zM169 495h1v1h-1zM143 496h1v1h-1zM98 497h1v1h-1zM110 491h1v1h-1zM118 504h1v1h-1zM182 496h1v1h-1zM126 486h1v1h-1zM165 494h1v1h-1zM161 522h1v1h-1zM114 492h1v1h-1zM114 487h1v1h-1zM101 487h1v1h-1zM162 498h1v1h-1zM136 485h1v1h-1zM68 503h1v1h-1zM155 495h1v1h-1zM178 489h1v1h-1zM72 524h1v1h-1zM96 498h1v1h-1zM81 492h1v1h-1zM80 484h1v1h-1zM61 493h1v1h-1zM151 493h1v1h-1zM143 496h1v1h-1zM84 507h1v1h-1zM174 494h1v1h-1zM91 495h1v1h-1zM122 499h1v1h-1zM60 505h1v1h-1zM147 497h1v1h-1zM61 494h1v1h-1zM78 494h1v1h-1zM148 482h1v1h-1zM112 501h1v1h-1zM139 498h1v1h-1zM104 501h1v1h-1zM113 497h1v1h-1zM62 518h1v1h-1zM175 499h1v1h-1zM143 504h1v1h-1zM144 482h1v1h-1zM75 493h1v1h-1zM105 497h1v1h-1zM55 499h1v1h-1zM76 491h1v1h-1zM154 500h1v1h-1zM177 483h1v1h-1zM140 505h1v1h-1zM156 500h1v1h-1zM76 492h1v1h-1zM87 498h1v1h-1zM174 492h1v1h-1zM176 495h1v1h-1zM88 501h1v1h-1zM81 504h1v1h-1zM166 516h1v1h-1zM109 493h1v1h-1zM116 495h1v1h-1zM162 489h1v1h-1zM145 485h1v1h-1zM162 503h1v1h-1zM88 497h1v1h-1zM59 486h1v1h-1zM101 501h1v1h-1zM93 496h1v1h-1zM85 495h1v1h-1zM178 491h1v1h-1zM69 494h1v1h-1zM80 498h1v1h-1zM71 498h1v1h-1zM106 496h1v1h-1zM177 493h1v1h-1zM121 481h1v1h-1zM169 491h1v1h-1zM168 499h1v1h-1zM164 499h1v1h-1zM86 481h1v1h-1zM148 503h1v1h-1zM174 505h1v1h-1zM156 481h1v1h-1zM112 496h1v1h-1zM158 493h1v1h-1zM136 495h1v1h-1zM141 496h1v1h-1zM59 497h1v1h-1zM130 490h1v1h-1zM113 513h1v1h-1zM76 489h1v1h-1zM101 491h1v1h-1zM163 499h1v1h-1zM121 497h1v1h-1zM181 490h1v1h-1zM69 492h1v1h-1zM73 488h1v1h-1zM77 490h1v1h-1zM111 502h1v1h-1zM171 507h1v1h-1zM161 482h1v1h-1zM88 500h1v1h-1zM83 518h1v1h-1zM67 504h1v1h-1zM133 493h1v1h-1zM169 492h1v1h-1zM143 507h1v1h-1zM64 500h1v1h-1zM103 493h1v1h-1zM169 501h1v1h-1zM165 497h1v1h-1zM155 519h1v1h-1zM110 520h1v1h-1zM105 500h1v1h-1zM90 495h1v1h-1zM68 487h1v1h-1zM120 489h1v1h-1zM152 485h1v1h-1zM127 499h1v1h-1zM66 492h1v1h-1zM169 495h1v1h-1zM139 527h1v1h-1zM137 505h1v1h-1zM134 492h1v1h-1zM140 496h1v1h-1zM106 501h1v1h-1zM78 490h1v1h-1zM157 495h1v1h-1zM131 493h1v1h-1zM94 500h1v1h-1zM154 500h1v1h-1zM181 500h1v1h-1zM92 502h1v1h-1zM164 501h1v1h-1zM90 486h1v1h-1zM59 498h1v1h-1zM113 489h1v1h-1zM147 483h1v1h-1zM170 498h1v1h-1zM117 486h1v1h-1zM72 497h1v1h-1zM78 490h1v1h-1zM176 490h1v1h-1zM122 500h1v1h-1zM114 506h1v1h-1zM181 490h1v1h-1zM128 498h1v1h-1zM105 492h1v1h-1zM120 499h1v1h-1zM89 489h1v1h-1zM123 513h1v1h-1zM110 494h1v1h-1zM128 496h1v1h-1zM85 527h1v1h-1zM106 490h1v1h-1zM176 496h1v1h-1zM170 522h1v1h-1zM108 481h1v1h-1zM74 491h1v1h-1zM122 481h1v1h-1zM126 485h1v1h-1zM148 503h1v1h-1zM179 492h1v1h-1zM180 496h1v1h-1zM91 495h1v1h-1zM85 486h1v1h-1zM141 491h1v1h-1zM105 503h1v1h-1zM129 490h1v1h-1zM154 528h1v1h-1zM74 496h1v1h-1zM125 494h1v1h-1zM68 494h1v1h-1zM93 494h1v1h-1zM135 495h1v1h-1zM164 486h1v1h-1zM157 484h1v1h-1zM107 489h1v1h-1zM160 500h1v1h-1zM128 504h1v1h-1zM87 496h1v1h-1zM127 500h1v1h-1zM121 493h1v1h-1zM178 495h1v1h-1zM97 490h1v1h-1zM182 496h1v1h-1zM140 524h1v1h-1zM164 492h1v1h-1zM78 497h1v1h-1zM136 494h1v1h-1zM106 485h1v1h-1zM160 500h1v1h-1zM108 495h1v1h-1zM70 498h1v1h-1zM147 497h1v1h-1zM110 503h1v1h-1zM153 496h1v1h-1zM134 503h1v1h-1zM60 496h1v1h-1zM176 525h1v1h-1zM55 504h1v1h-1zM174 517h1v1h-1zM82 492h1v1h-1zM82 485h1v1h-1zM172 501h1v1h-1zM55 493h1v1h-1zM64 494h1v1h-1zM87 497h1v1h-1zM166 491h1v1h-1zM73 505h1v1h-1zM104 493h1v1h-1zM55 494h1v1h-1zM172 494h1v1h-1zM117 493h1v1h-1zM118 496h1v1h-1zM133 493h1v1h-1zM162 493h1v1h-1zM163 481h1v1h-1zM181 495h1v1h-1zM162 496h1v1h-1zM56 500h1v1h-1zM72 506h1v1h-1zM134 493h1v1h-1zM174 500h1v1h-1zM130 498h1v1h-1zM102 483h1v1h-1zM161 480h1v1h-1zM92 480h1v1h-1zM109 498h1v1h-1zM161 489h1v1h-1zM155 500h1v1h-1zM135 508h1v1h-1zM97 492h1v1h-1zM174 499h1v1h-1zM151 506h1v1h-1zM168 486h1v1h-1zM126 496h1v1h-1zM86 500h1v1h-1zM152 501h1v1h-1zM165 499h1v1h-1zM105 504h1v1h-1zM104 500h1v1h-1zM176 496h1v1h-1zM158 488h1v1h-1zM71 489h1v1h-1zM104 503h1v1h-1zM141 495h1v1h-1zM66 500h1v1h-1zM136 482h1v1h-1zM55 498h1v1h-1zM71 493h1v1h-1zM176 496h1v1h-1zM153 504h1v1h-1zM181 497h1v1h-1zM57 500h1v1h-1zM93 495h1v1h-1zM136 501h1v1h-1zM75 495h1v1h-1zM95 490h1v1h-1zM63 497h1v1h-1zM96 513h1v1h-1zM73 490h1v1h-1zM79 507h1v1h-1zM169 491h1v1h-1zM172 499h1v1h-1zM86 494h1v1h-1zM126 495h1v1h-1zM121 493h1v1h-1zM117 494h1v1h-1zM103 496h1v1h-1zM117 493h1v1h-1zM80 507h1v1h-1zM81 503h1v1h-1zM114 504h1v1h-1zM65 481h1v1h-1zM85 498h1v1h-1zM104 482h1v1h-1zM100 494h1v1h-1zM56 498h1v1h-1zM144 495h1v1h-1zM91 508h1v1h-1zM64 499h1v1h-1zM107 501h1v1h-1zM159 492h1v1h-1zM134 488h1v1h-1zM181 490h1v1h-1zM80 499h1v1h-1zM94 490h1v1h-1zM96 494h1v1h-1zM127 496h1v1h-1zM68 498h1v1h-1zM146 488h1v1h-1zM148 495h1v1h-1zM158 487h1v1h-1zM95 501h1v1h-1zM158 495h1v1h-1zM96 489h1v1h-1zM91 504h1v1h-1zM77 504h1v1h-1zM98 494h1v1h-1zM98 480h1v1h-1zM153 501h1v1h-1zM105 502h1v1h-1zM66 525h1v1h-1zM135 504h1v1h-1zM154 500h1v1h-1zM96 502h1v1h-1zM286 493h1v1h-1zM304 493h1v1h-1zM285 481h1v1h-1zM281 492h1v1h-1zM232 498h1v1h-1zM192 495h1v1h-1zM282 497h1v1h-1zM261 494h1v1h-1zM246 499h1v1h-1zM297 492h1v1h-1zM183 497h1v1h-1zM243 498h1v1h-1zM300 501h1v1h-1zM285 491h1v1h-1zM293 501h1v1h-1zM312 489h1v1h-1zM216 500h1v1h-1zM203 497h1v1h-1zM279 501h1v1h-1zM189 507h1v1h-1zM211 506h1v1h-1zM308 501h1v1h-1zM225 500h1v1h-1zM239 495h1v1h-1zM247 503h1v1h-1zM253 483h1v1h-1zM219 505h1v1h-1zM305 494h1v1h-1zM312 495h1v1h-1zM233 492h1v1h-1zM254 503h1v1h-1zM226 494h1v1h-1zM195 495h1v1h-1zM298 498h1v1h-1zM209 497h1v1h-1zM283 495h1v1h-1zM279 528h1v1h-1zM220 500h1v1h-1zM296 498h1v1h-1zM195 497h1v1h-1zM262 506h1v1h-1zM263 500h1v1h-1zM239 498h1v1h-1zM293 495h1v1h-1zM195 493h1v1h-1zM194 486h1v1h-1zM273 497h1v1h-1zM240 494h1v1h-1zM217 498h1v1h-1zM304 487h1v1h-1zM245 496h1v1h-1zM199 503h1v1h-1zM252 494h1v1h-1zM185 501h1v1h-1zM272 498h1v1h-1zM309 503h1v1h-1zM194 488h1v1h-1zM230 489h1v1h-1zM209 497h1v1h-1zM233 493h1v1h-1zM312 496h1v1h-1zM227 490h1v1h-1zM195 525h1v1h-1zM184 496h1v1h-1zM302 499h1v1h-1zM227 491h1v1h-1zM242 491h1v1h-1zM250 494h1v1h-1zM294 504h1v1h-1zM250 504h1v1h-1zM238 497h1v1h-1zM226 493h1v1h-1zM234 485h1v1h-1zM266 495h1v1h-1zM244 502h1v1h-1zM303 497h1v1h-1zM184 496h1v1h-1zM242 494h1v1h-1zM237 498h1v1h-1zM226 488h1v1h-1zM210 492h1v1h-1zM219 488h1v1h-1zM218 498h1v1h-1zM200 490h1v1h-1zM276 505h1v1h-1zM199 486h1v1h-1zM281 493h1v1h-1zM211 505h1v1h-1zM205 498h1v1h-1zM256 491h1v1h-1zM235 495h1v1h-1zM249 494h1v1h-1zM255 500h1v1h-1zM265 498h1v1h-1zM304 498h1v1h-1zM190 488h1v1h-1zM208 499h1v1h-1zM238 502h1v1h-1zM256 486h1v1h-1zM234 500h1v1h-1zM196 497h1v1h-1zM308 502h1v1h-1zM309 505h1v1h-1zM249 492h1v1h-1zM237 481h1v1h-1zM310 504h1v1h-1zM203 507h1v1h-1zM209 495h1v1h-1zM285 485h1v1h-1zM205 499h1v1h-1zM278 494h1v1h-1zM311 506h1v1h-1zM242 481h1v1h-1zM191 495h1v1h-1zM222 496h1v1h-1zM265 496h1v1h-1zM248 491h1v1h-1zM301 499h1v1h-1zM312 494h1v1h-1zM222 506h1v1h-1zM266 495h1v1h-1zM243 492h1v1h-1zM209 499h1v1h-1zM233 506h1v1h-1zM260 496h1v1h-1zM233 504h1v1h-1zM254 495h1v1h-1zM191 502h1v1h-1zM294 497h1v1h-1zM258 491h1v1h-1zM286 493h1v1h-1zM293 498h1v1h-1zM290 499h1v1h-1zM241 499h1v1h-1zM299 494h1v1h-1zM208 481h1v1h-1zM285 498h1v1h-1zM247 497h1v1h-1zM188 496h1v1h-1zM229 482h1v1h-1zM185 497h1v1h-1zM210 497h1v1h-1zM224 505h1v1h-1zM234 491h1v1h-1zM299 500h1v1h-1zM187 502h1v1h-1zM270 505h1v1h-1zM236 515h1v1h-1zM283 504h1v1h-1zM274 493h1v1h-1zM280 487h1v1h-1zM290 485h1v1h-1zM273 491h1v1h-1zM260 504h1v1h-1zM239 522h1v1h-1zM301 491h1v1h-1zM200 498h1v1h-1zM303 500h1v1h-1zM220 499h1v1h-1zM288 494h1v1h-1zM215 496h1v1h-1zM241 495h1v1h-1zM247 515h1v1h-1zM306 500h1v1h-1zM254 499h1v1h-1zM265 496h1v1h-1zM204 495h1v1h-1zM260 489h1v1h-1zM266 491h1v1h-1zM271 487h1v1h-1zM185 490h1v1h-1zM258 491h1v1h-1zM219 492h1v1h-1zM298 492h1v1h-1zM286 492h1v1h-1zM206 503h1v1h-1zM259 499h1v1h-1zM203 496h1v1h-1zM212 494h1v1h-1zM242 496h1v1h-1zM197 503h1v1h-1zM308 492h1v1h-1zM184 495h1v1h-1zM310 502h1v1h-1zM278 508h1v1h-1zM202 495h1v1h-1zM190 489h1v1h-1zM267 490h1v1h-1zM306 503h1v1h-1zM191 496h1v1h-1zM215 502h1v1h-1zM276 501h1v1h-1zM236 495h1v1h-1zM247 502h1v1h-1zM257 497h1v1h-1zM268 494h1v1h-1zM312 493h1v1h-1zM309 495h1v1h-1zM264 491h1v1h-1zM205 489h1v1h-1zM286 489h1v1h-1zM259 489h1v1h-1zM304 499h1v1h-1zM311 484h1v1h-1zM279 498h1v1h-1zM204 499h1v1h-1zM300 492h1v1h-1zM229 496h1v1h-1zM208 485h1v1h-1zM186 502h1v1h-1zM262 494h1v1h-1zM260 488h1v1h-1zM188 499h1v1h-1zM196 497h1v1h-1zM213 496h1v1h-1zM286 487h1v1h-1zM282 507h1v1h-1zM222 496h1v1h-1zM209 496h1v1h-1zM221 496h1v1h-1zM185 491h1v1h-1zM205 491h1v1h-1zM303 500h1v1h-1zM245 500h1v1h-1zM195 500h1v1h-1zM220 490h1v1h-1zM310 504h1v1h-1zM248 480h1v1h-1zM191 487h1v1h-1zM203 494h1v1h-1zM225 486h1v1h-1zM307 494h1v1h-1zM295 492h1v1h-1zM212 499h1v1h-1zM289 501h1v1h-1zM298 486h1v1h-1zM268 489h1v1h-1zM268 500h1v1h-1zM186 498h1v1h-1zM262 506h1v1h-1zM246 499h1v1h-1zM242 494h1v1h-1zM183 494h1v1h-1zM223 501h1v1h-1zM193 491h1v1h-1zM220 502h1v1h-1zM310 490h1v1h-1zM307 493h1v1h-1zM242 489h1v1h-1zM284 493h1v1h-1zM248 487h1v1h-1zM281 490h1v1h-1zM273 493h1v1h-1zM249 484h1v1h-1zM265 498h1v1h-1zM231 490h1v1h-1zM257 498h1v1h-1zM286 502h1v1h-1zM246 508h1v1h-1zM278 495h1v1h-1zM301 492h1v1h-1zM190 497h1v1h-1zM188 493h1v1h-1zM307 493h1v1h-1zM254 505h1v1h-1zM216 489h1v1h-1zM234 522h1v1h-1zM204 488h1v1h-1zM277 483h1v1h-1zM307 480h1v1h-1zM414 485h1v1h-1zM336 498h1v1h-1zM335 485h1v1h-1zM442 496h1v1h-1zM353 493h1v1h-1zM369 504h1v1h-1zM403 497h1v1h-1zM320 489h1v1h-1zM436 492h1v1h-1zM314 485h1v1h-1zM389 496h1v1h-1zM339 495h1v1h-1zM412 497h1v1h-1zM356 501h1v1h-1zM316 504h1v1h-1zM322 502h1v1h-1zM332 486h1v1h-1zM408 481h1v1h-1zM427 483h1v1h-1zM318 496h1v1h-1zM399 493h1v1h-1zM342 492h1v1h-1zM369 492h1v1h-1zM428 492h1v1h-1zM351 496h1v1h-1zM352 498h1v1h-1zM388 492h1v1h-1zM438 496h1v1h-1zM436 506h1v1h-1zM327 501h1v1h-1zM367 502h1v1h-1zM343 493h1v1h-1zM406 494h1v1h-1zM374 480h1v1h-1zM412 503h1v1h-1zM327 506h1v1h-1zM349 510h1v1h-1zM426 495h1v1h-1zM348 501h1v1h-1zM386 496h1v1h-1zM417 498h1v1h-1zM348 497h1v1h-1zM371 493h1v1h-1zM333 503h1v1h-1zM439 492h1v1h-1zM348 500h1v1h-1zM362 493h1v1h-1zM329 497h1v1h-1zM327 495h1v1h-1zM385 502h1v1h-1zM439 496h1v1h-1zM435 499h1v1h-1zM376 502h1v1h-1zM406 499h1v1h-1zM314 504h1v1h-1zM331 500h1v1h-1zM395 502h1v1h-1zM328 491h1v1h-1zM439 488h1v1h-1zM347 506h1v1h-1zM370 492h1v1h-1zM392 501h1v1h-1zM320 504h1v1h-1zM362 502h1v1h-1zM431 499h1v1h-1zM339 490h1v1h-1zM358 491h1v1h-1zM439 500h1v1h-1zM341 496h1v1h-1zM348 493h1v1h-1zM371 498h1v1h-1zM414 502h1v1h-1zM412 498h1v1h-1zM322 504h1v1h-1zM405 493h1v1h-1zM398 502h1v1h-1zM395 502h1v1h-1zM326 492h1v1h-1zM403 496h1v1h-1zM315 497h1v1h-1zM330 493h1v1h-1zM318 496h1v1h-1zM414 504h1v1h-1zM324 503h1v1h-1zM323 499h1v1h-1zM381 484h1v1h-1zM382 501h1v1h-1zM322 493h1v1h-1zM316 505h1v1h-1zM386 495h1v1h-1zM355 498h1v1h-1zM381 498h1v1h-1zM350 497h1v1h-1zM388 484h1v1h-1zM386 500h1v1h-1zM386 498h1v1h-1zM369 493h1v1h-1zM406 497h1v1h-1zM435 494h1v1h-1zM375 492h1v1h-1zM411 522h1v1h-1zM316 481h1v1h-1zM374 495h1v1h-1zM382 507h1v1h-1zM388 488h1v1h-1zM330 495h1v1h-1zM328 502h1v1h-1zM403 491h1v1h-1zM370 514h1v1h-1zM419 495h1v1h-1zM364 502h1v1h-1zM337 500h1v1h-1zM434 498h1v1h-1zM345 491h1v1h-1zM418 498h1v1h-1zM440 507h1v1h-1zM351 501h1v1h-1zM341 496h1v1h-1zM430 495h1v1h-1zM403 497h1v1h-1zM411 487h1v1h-1zM440 494h1v1h-1zM390 496h1v1h-1zM409 490h1v1h-1zM397 502h1v1h-1zM375 481h1v1h-1zM422 480h1v1h-1zM319 498h1v1h-1zM440 497h1v1h-1zM392 508h1v1h-1zM423 495h1v1h-1zM402 487h1v1h-1zM330 491h1v1h-1zM408 499h1v1h-1zM352 483h1v1h-1zM437 500h1v1h-1zM400 500h1v1h-1zM336 494h1v1h-1zM332 497h1v1h-1zM341 494h1v1h-1zM400 507h1v1h-1zM420 497h1v1h-1zM366 492h1v1h-1zM359 498h1v1h-1zM340 507h1v1h-1zM323 487h1v1h-1zM313 499h1v1h-1zM314 483h1v1h-1zM338 499h1v1h-1zM363 501h1v1h-1zM381 484h1v1h-1zM349 496h1v1h-1zM344 497h1v1h-1zM340 490h1v1h-1zM438 498h1v1h-1zM328 499h1v1h-1zM395 493h1v1h-1zM383 494h1v1h-1zM338 505h1v1h-1zM329 496h1v1h-1zM411 493h1v1h-1zM414 505h1v1h-1zM425 493h1v1h-1zM370 504h1v1h-1zM357 503h1v1h-1zM429 498h1v1h-1zM439 512h1v1h-1zM375 499h1v1h-1zM369 496h1v1h-1zM437 502h1v1h-1zM335 495h1v1h-1zM360 503h1v1h-1zM414 491h1v1h-1zM411 499h1v1h-1zM344 504h1v1h-1zM513 492h1v1h-1zM479 496h1v1h-1zM478 495h1v1h-1zM462 491h1v1h-1zM468 502h1v1h-1zM459 496h1v1h-1zM544 492h1v1h-1zM488 496h1v1h-1zM523 481h1v1h-1zM481 484h1v1h-1zM469 496h1v1h-1zM459 482h1v1h-1zM519 484h1v1h-1zM490 496h1v1h-1zM508 503h1v1h-1zM458 490h1v1h-1zM552 501h1v1h-1zM492 500h1v1h-1zM461 495h1v1h-1zM454 501h1v1h-1zM472 499h1v1h-1zM456 504h1v1h-1zM546 494h1v1h-1zM451 490h1v1h-1zM479 500h1v1h-1zM479 502h1v1h-1zM502 503h1v1h-1zM553 504h1v1h-1zM465 499h1v1h-1zM527 503h1v1h-1zM446 499h1v1h-1zM474 522h1v1h-1zM488 480h1v1h-1zM466 494h1v1h-1zM520 500h1v1h-1zM448 498h1v1h-1zM498 494h1v1h-1zM491 497h1v1h-1zM523 492h1v1h-1zM550 497h1v1h-1zM509 496h1v1h-1zM530 504h1v1h-1zM457 501h1v1h-1zM479 486h1v1h-1zM517 489h1v1h-1zM474 489h1v1h-1zM483 504h1v1h-1zM538 483h1v1h-1zM531 508h1v1h-1zM521 494h1v1h-1zM454 505h1v1h-1zM499 485h1v1h-1zM507 502h1v1h-1zM523 497h1v1h-1zM529 496h1v1h-1zM508 501h1v1h-1zM505 489h1v1h-1zM532 497h1v1h-1zM465 506h1v1h-1zM524 494h1v1h-1zM450 495h1v1h-1zM454 494h1v1h-1zM460 497h1v1h-1zM504 493h1v1h-1zM508 491h1v1h-1zM525 494h1v1h-1zM556 498h1v1h-1zM473 501h1v1h-1zM513 504h1v1h-1zM529 498h1v1h-1zM206 360h1v1h-1z" fill="#f4f000"/></svg>
</body></html>
